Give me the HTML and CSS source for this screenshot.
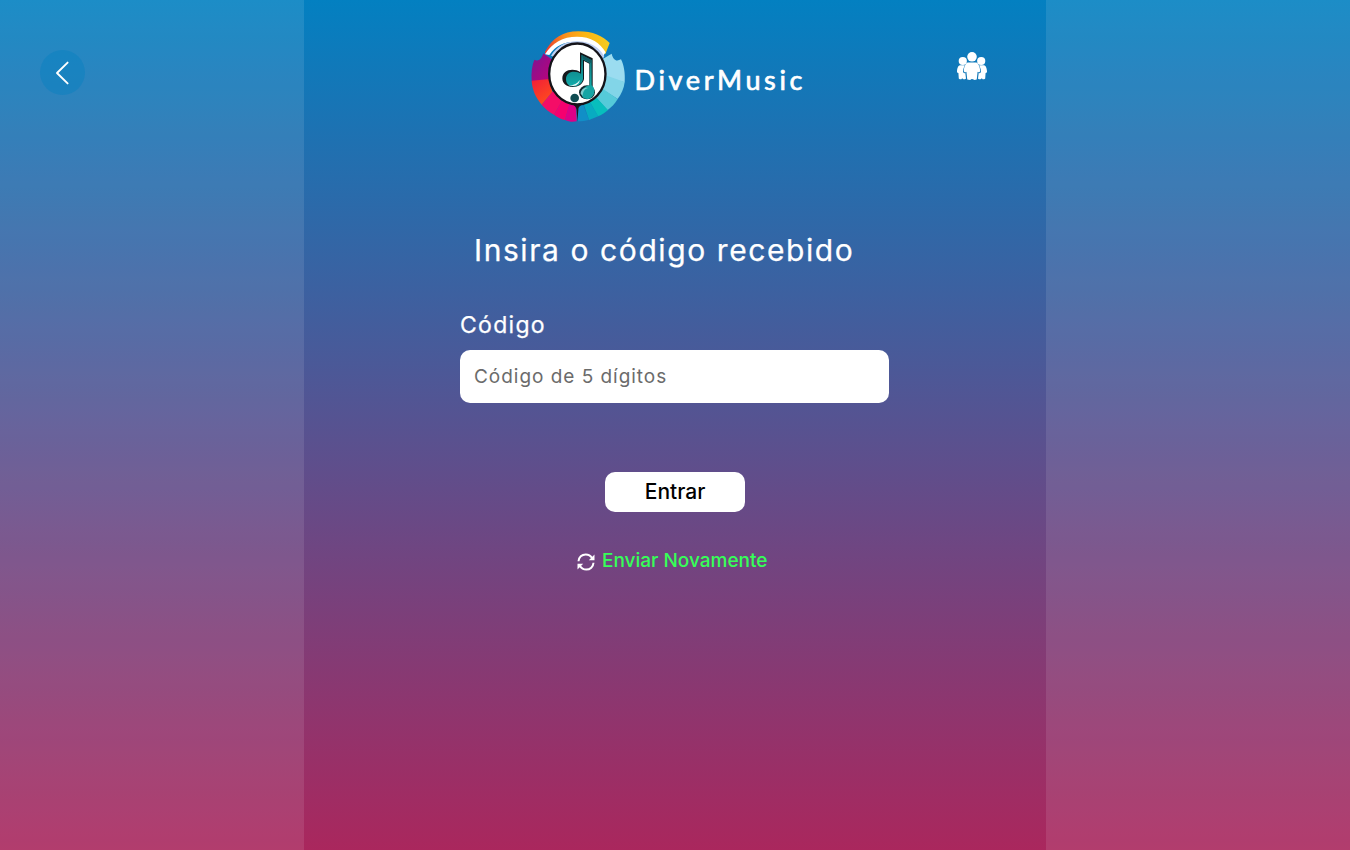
FILE: index.html
```html
<!DOCTYPE html>
<html lang="pt-BR">
<head>
<meta charset="utf-8">
<title>DiverMusic</title>
<link rel="stylesheet" href="styles.css">
</head>
<body>
<div class="page">
  <aside class="side">
    <button class="back" aria-label="Voltar">
      <svg width="45" height="45" viewBox="0 0 45 45"><path d="M27.600 12.600 17 23l10.600 10.400" fill="none" stroke="#fff" stroke-width="1.900" stroke-linecap="round" stroke-linejoin="round"/></svg>
    </button>
  </aside>
  <main class="panel">
    <header class="header">
      <div class="brand">
        <svg class="logo" viewBox="0 0 315 306">
          <defs>
            <linearGradient id="arc"><stop offset="0" stop-color="#e9362f"/><stop offset=".3" stop-color="#fa8f1c"/><stop offset=".6" stop-color="#fbb414"/><stop offset="1" stop-color="#f5cc20"/></linearGradient>
            <linearGradient id="purple" x2="1" y2="1"><stop offset="0" stop-color="#7b1593"/><stop offset="1" stop-color="#c20079"/></linearGradient>
            <linearGradient id="red" x2=".6" y2="1"><stop offset="0" stop-color="#f01d3a"/><stop offset="1" stop-color="#ff4b1d"/></linearGradient>
            <linearGradient id="teal" x2="0" y2="1"><stop offset="0" stop-color="#0f6f75"/><stop offset="1" stop-color="#12b0ae"/></linearGradient>
          </defs>
          <path d="M60 80C82 40 112 19 160 19c43 0 74 14 94 35l-13 34C218 51 193 37 156 37c-41 0-68 17-96 51Z" fill="url(#arc)"/>
          <path d="M60 88C82 53 113 35 156 35c43 0 69 18 86 47l-8 12c-20-28-42-44-80-44-39 0-62 12-81 40Z" fill="#fff"/>
          <path d="M78 92c18-28 42-43 78-43 40 0 66 19 82 44l-6 12c-18-26-43-44-76-44-31 0-54 13-70 34Z" fill="#bfd0f2"/>
          <path d="M28 104c11 6 20 1 27-19l27 19-10 72-52-9c-2-24 1-46 8-63Z" fill="url(#purple)"/>
          <path d="m20 167 54-5 8 39-32 38c-18-21-28-44-30-72Z" fill="url(#red)"/>
          <path d="m50 239 34-41 27 30-24 41c-14-7-26-17-37-30Z" fill="#f40d67"/>
          <path d="m87 269 24-43 23 12-14 47c-13-3-23-8-33-16Z" fill="#f5006f"/>
          <path d="m120 285 13-49 20 6 2 47c-14 3-23 1-35-4Z" fill="#dc0088"/>
          <path d="M260 86c5 20 14 24 28 17 9 18 13 42 11 69l-71-17V105Z" fill="#9bdcf0"/>
          <path d="m242 151 57 20c-2 20-10 36-21 51l-49-31Z" fill="#82d5e8"/>
          <path d="m229 188 49 34c-8 14-18 24-31 34l-38-44Z" fill="#55cad9"/>
          <path d="m209 212 40 43c-9 8-20 15-30 19l-28-49Z" fill="#08bebd"/>
          <path d="m191 225 29 49-28 11-16-48Z" fill="#08abc1"/>
          <path d="m174 238 18 46c-11 4-21 5-33 5l-2-46Z" fill="#118fc7"/>
          <path d="M138 236c10 4 16 9 17 19l2 34 3-34c0-10 6-14 17-18Z" fill="#161719"/>
          <ellipse cx="157" cy="147" rx="84.500" ry="91.500" fill="#fff" stroke="#141319" stroke-width="7"/>
          <path d="M112 160c0-16 13-26 30-26 9 0 17 2 23 7V82l38 18v90h-10v-74l-16-8v54c-3 15-17 24-34 24-19 0-31-10-31-26Z" fill="#14181c"/>
          <path d="M123 162c0-14 10-22 24-22 9 0 16 2 21 6l1-57 31 16v85h-6v-76l-20-10v57c-2 14-14 23-31 23-12 0-20-9-20-22Z" fill="url(#teal)"/>
          <path d="M131 181c14 1 25-4 33-16 0 10-9 17-19 18-6 0-10-1-14-2Z" fill="#e8f6f6"/>
          <path d="m171 91 27 14v9l-23-11Z" fill="#115b63"/>
          <ellipse cx="186" cy="202" rx="24" ry="21" fill="#13282e"/>
          <path d="M202 182c9 8 8 25-1 34-8 8-20 8-28 1-5-7-4-20 3-27 8-8 18-11 26-8Z" fill="#16a5a4"/>
          <path d="M167 206c0-13 12-20 22-17-12 3-15 12-16 24Z" fill="#7fcccd"/>
          <circle cx="149" cy="219" r="13" fill="#114d53"/>
        </svg>
        <svg class="wordmark" viewBox="0 0 180 50"><text class="name" x="9.500" y="35" textLength="168">DiverMusic</text></svg>
      </div>
      <svg class="people" viewBox="0 0 32 30" fill="#fff">
        <circle cx="16" cy="5.800" r="4.800"/><circle cx="6.800" cy="10" r="4.100"/><circle cx="25.200" cy="10" r="4.100"/>
        <path d="M12 11.400h8c2.800 0 4.200 6.400 4.200 8.400 0 1.400-1.400 2-2.600 1l-.8 7.200c-.2 1.200-3.800 1.200-4.200 0h-1.200c-.4 1.200-4 1.200-4.200 0l-.8-7.200c-1.200 1-2.600.4-2.600-1 0-2 1.400-8.400 4.200-8.400Z"/>
        <path d="M4 14.200h4.800c-1.400 3-2.300 5.800-1.500 7.200.5.900 1.500.8 2 .7l.7 5.400c-.2 1-2.800 1.200-3.400 0H6c-.4 1.200-3 1-3.200 0l-.4-5.600C1.400 22 .8 21.200 1 20c.2-2 .9-5.800 3-5.800ZM28 14.200h-4.800c1.400 3 2.300 5.800 1.500 7.200-.5.900-1.500.8-2 .7l-.7 5.400c.2 1 2.800 1.200 3.400 0h.6c.4 1.200 3 1 3.200 0l.4-5.600c1 .1 1.600-.7 1.400-1.900-.2-2-.9-5.800-3-5.800Z"/>
      </svg>
    </header>
    <form class="form">
      <h1 class="title">Insira o código recebido</h1>
      <label class="label" for="code">Código</label>
      <input class="input" id="code" type="text" maxlength="5" placeholder="Código de 5 dígitos">
      <button class="submit" type="button">Entrar</button>
      <a class="resend">
        <svg class="refresh" viewBox="0 0 18 18" fill="none" stroke="#fff" stroke-width="2"><path d="M1.500 8.300C1.700 4.300 4.900 1.400 8.700 1.400c2.900 0 5 1.300 6.300 3.600M16.500 9.700c-.2 4-3.400 6.900-7.200 6.900-2.900 0-5-1.300-6.300-3.600"/><path d="M17.500 1.500v5.700h-5.700ZM.5 16.500v-5.700h5.700Z" fill="#fff" stroke="none"/></svg>
        <span>Enviar Novamente</span>
      </a>
    </form>
  </main>
  <aside class="side"></aside>
</div>
</body>
</html>
```
FILE: styles.css
```css
* { box-sizing: border-box; }
body { margin: 0; font-family: Inter, sans-serif; color: #fff; }
.page {
  display: grid;
  grid-template-columns: 1fr 742px 1fr;
  height: 100vh;
  background: linear-gradient(180deg, #0380c1 0%, #505695 46%, #aa275d 100%);
}
.side { background: rgba(255, 255, 255, .1); padding: 50px 40px; }
.back {
  display: block; width: 45px; height: 45px; padding: 0;
  border: 0; border-radius: 50%; background: rgba(3, 128, 193, .4);
}
.back svg { display: block; }
.header { display: flex; justify-content: space-between; height: 127px; padding: 25px 58px 0 221px; }
.brand { display: flex; }
.logo { width: 105px; height: 102px; }
.wordmark { width: 180px; height: 50px; margin: 30px 0 0 -5px; overflow: visible; }
.name {
  font: 400 27px Lato, sans-serif; fill: #fff;
  stroke: #fff; stroke-width: .7px; stroke-linejoin: round;
}
.people { width: 32px; height: 30px; margin-top: 26px; }
.form { display: flex; flex-direction: column; width: 429px; margin: 103px 0 0 156px; }
.title, .label { font-weight: 400; -webkit-text-stroke: .25px #fff; }
.title { margin: 0 0 0 14px; font-size: 30px; line-height: 40px; letter-spacing: 1.580px; white-space: nowrap; }
.label { margin-top: 40px; font-size: 23px; line-height: 30px; letter-spacing: 1.300px; }
.input {
  height: 53px; margin-top: 10px; padding: 0 14px; border: 0; border-radius: 10px;
  background: #fff; font: 400 19px Inter, sans-serif; letter-spacing: .97px;
}
.input::placeholder { color: #6b6b6b; }
.submit {
  align-self: center; width: 140px; height: 40px; margin-top: 69px; padding: 0 0 2px 1px;
  border: 0; border-radius: 10px; background: #fff; color: #000; font: 500 21px Inter, sans-serif;
}
.resend {
  display: flex; align-items: center; gap: 7.500px; margin: 36px 0 0 116.500px;
  color: #36ff58; font-size: 19px; line-height: 26px; font-weight: 500; white-space: nowrap;
}
.refresh { width: 18px; height: 18px; margin-top: 2px; }
```
